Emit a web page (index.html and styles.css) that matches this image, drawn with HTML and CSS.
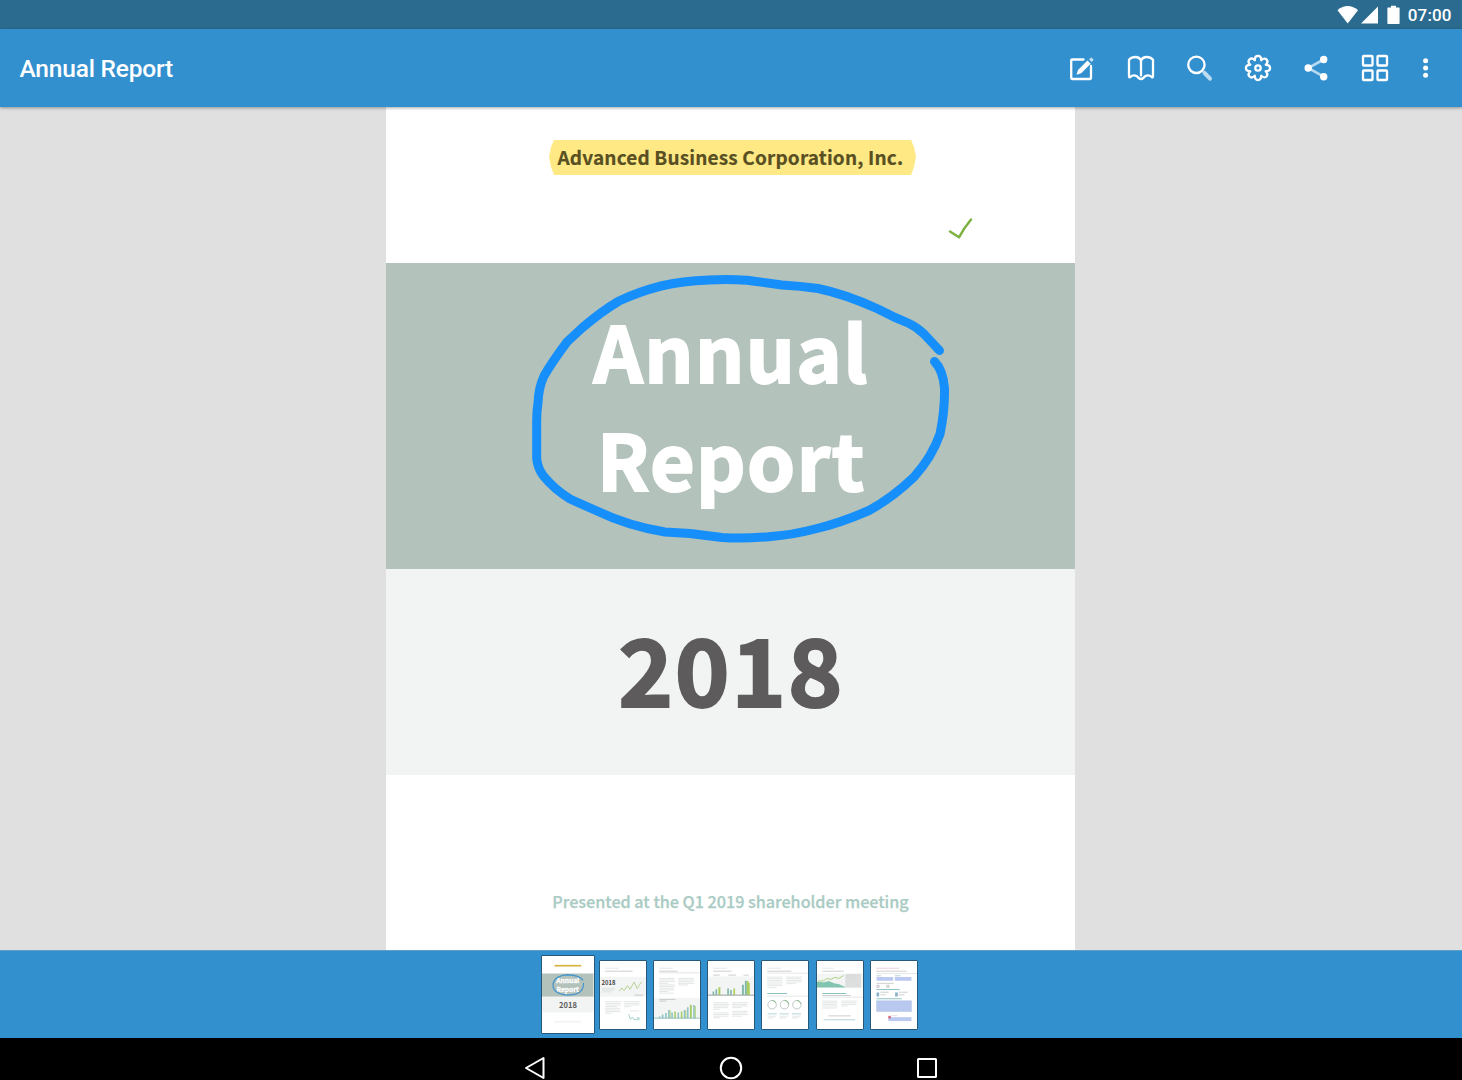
FILE: index.html
```html
<!DOCTYPE html>
<html lang="en">
<head>
<meta charset="utf-8">
<title>Annual Report</title>
<link rel="stylesheet" href="styles.css">
</head>
<body>
<div class="status">
  <svg class="status-icons" viewBox="0 0 64 20" width="64" height="20">
    <path d="M0.5 5.2Q10.500-3 21 5.200L10.700 18.500Z"/>
    <path d="M24 18.500L41 1.500V18.500Z"/>
    <path d="M51 2.500h3v-1.700h5v1.700h3q.6 0 .6.600v15.200q0 .7-.6.700h-11q-.6 0-.6-.7V3.100q0-.6.600-.6Z"/>
  </svg>
  <span class="clock">07:00</span>
</div>
<header class="appbar">
  <h1 class="title">Annual Report</h1>
  <div class="actions">
    <svg class="icon" viewBox="0 0 28 28"><path class="ln" d="M15.500 5.500H4.200q-1 0-1 1V24q0 1 1 1H22q1 0 1-1V12"/><path class="fill" d="M8.500 20.800L10 16L19.500 6.500L22.700 9.700L13.200 19.200Z"/><path class="fill soft" d="M21 5.500l1.500-1.600q.7-.6 1.400 0l1.200 1.200q.6.700 0 1.400l-1.500 1.500Z"/></svg>
    <svg class="icon" viewBox="0 0 28 28"><path class="ln" d="M14 6.500Q12.300 3 8.500 3Q4.500 3 2 5.700V22.300Q2 23.900 3.300 23Q5.600 20.800 8.500 21.600Q10.500 22.200 11.500 23.800Q14 26.200 16.500 23.800Q17.500 22.200 19.500 21.600Q22.400 20.800 24.700 23Q26 23.900 26 22.300V5.700Q23.500 3 19.500 3Q15.700 3 14 6.500V21.500"/></svg>
    <svg class="icon" viewBox="0 0 28 28"><circle class="ln" cx="10.400" cy="10.800" r="8.200"/><path class="handle" d="M18.500 18.800L24 24.700"/></svg>
    <svg class="icon" viewBox="0 0 28 28"><path class="ln" d="M10.800 6.240C10.800 .5 17.200 .5 17.200 6.240C21.260 2.180 25.820 6.740 21.760 10.800C27.500 10.800 27.500 17.200 21.760 17.200C25.820 21.260 21.260 25.820 17.200 21.760C17.200 27.500 10.800 27.500 10.800 21.760C6.740 25.820 2.180 21.260 6.240 17.200C.5 17.200 .5 10.800 6.240 10.800C2.180 6.740 6.740 2.180 10.800 6.240Z"/><circle class="ln" cx="14" cy="14" r="2.700"/></svg>
    <svg class="icon" viewBox="0 0 28 28"><path class="share-line" d="M20.700 5.500L5.200 14L20.700 22.700"/><circle class="fill" cx="20.700" cy="5.500" r="3.700"/><circle class="fill" cx="5.200" cy="14" r="3.700"/><circle class="fill" cx="20.700" cy="22.700" r="3.700"/></svg>
    <svg class="icon" viewBox="0 0 28 28"><g class="ln"><rect x="2" y="2" width="9.500" height="9.500" rx=".8"/><rect x="16.500" y="2" width="9.500" height="9.500" rx=".8"/><rect x="2" y="16.500" width="9.500" height="9.500" rx=".8"/><rect x="16.500" y="16.500" width="9.500" height="9.500" rx=".8"/></g></svg>
    <svg class="icon more" viewBox="0 0 14 28"><g class="fill"><circle cx="6.600" cy="6.800" r="2.500"/><circle cx="6.600" cy="14" r="2.500"/><circle cx="6.600" cy="21.200" r="2.500"/></g></svg>
  </div>
</header>
<main class="viewer">
  <article class="page">
    <div class="company"><span class="highlight">Advanced Business Corporation, Inc.</span></div>
    <div class="banner"><div class="line-one">Annual</div><div class="line-two">Report</div></div>
    <div class="year"><span>2018</span></div>
    <footer class="presented"><span>Presented at the Q1 2019 shareholder meeting</span></footer>
    <svg class="ink" viewBox="386 107 689 843" width="689" height="843">
      <path class="check" d="M950 231.500L959 237.300Q964 228 971 219.500"/>
      <path class="circle" d="M939.500 350.500L924 334Q917 327 908 323L894 317L878 309Q845 294 818 288.500Q800 286 782 285L747 280.300Q728 279 709 280Q682 281 661 286Q638 292 619 301Q602 311 582 328L567 342Q552 362 544 376Q538.500 388 538 403Q536.500 412 536.700 424V459Q538 469 543.500 476Q554 489 570 499L597 511Q628 526 665 532L690 533.500L722 537.500Q745 539 771 536.500Q792 535 815 529Q840 523 869 510.500Q892 498 914 477Q932 457 940 434Q945 410 944.500 388Q943 370 934.500 361.500"/>
    </svg>
  </article>
</main>
<nav class="strip">
  <svg class="thumb current" viewBox="0 0 156 234" preserveAspectRatio="none">
    <path fill="#d3b43a" d="M38 27h81v5H38z"/><path fill="#b3c2ba" d="M0 53h156v71H0z"/><path fill="#f2f4f4" d="M0 124h156v48H0z"/>
    <text class="mini-title" x="78" y="82">Annual</text><text class="mini-title" x="78" y="109">Report</text>
    <path fill="none" stroke="#4896cc" stroke-width="4" d="M124 74Q115 58 76 57Q40 60 34 82Q28 114 76 119Q126 120 126 82"/>
    <text class="mini-year" x="79" y="158">2018</text><path stroke="#dce6e3" stroke-width="2" d="M38 200h80"/>
  </svg>
  <svg class="thumb" viewBox="0 0 141 207" preserveAspectRatio="none">
    <path class="rule" d="M16 22h42"/><path class="dark" d="M16 31h84"/><path class="pale" d="M0 48h141v61H0z"/>
    <text class="mini-left" x="5" y="72">2018</text><path class="rule" d="M6 84h40M6 89h37M6 94h28M16 124h49M16 129h47M16 134h48M16 139h36M16 144h47M16 149h45M16 154h47M16 159h20M74 124h50M74 129h46M74 134h48M74 139h20M92 152h28"/>
    <path fill="none" stroke="#b7d091" stroke-width="3" d="M59 92l8-10 7 8 10-15 8 11 13-22 9 20 8-13 6-8"/><path fill="none" stroke="#76b9b2" stroke-width="2" d="M88 162l5 15 7-6 5 8 8-1M113 174q9-4 8 3-3 4-8 1"/><path class="dark" d="M105 104h27"/>
  </svg>
  <svg class="thumb" viewBox="0 0 141 207" preserveAspectRatio="none">
    <path class="rule" d="M16 22h42"/><path class="dark" d="M16 31h56"/><path class="rule" d="M16 36h125M16 53h46M16 58h48M16 63h47M16 68h28M16 73h48M16 78h47M16 83h45M16 88h47M16 93h28M16 98h44M74 53h49M74 58h50M74 63h47M74 68h50M74 73h30"/>
    <path class="pale" d="M0 112h141v63H0z"/><path class="dark" d="M16 117h50M16 122h22"/>
    <path fill="#93c5c6" d="M15 169h5v5h-5zM24 163h5v11h-5zM34 158h5v16h-5zM43 149h5v25h-5zM53 157h5v17h-5zM72 157h5v17h-5zM91 149h5v25h-5zM101 141h5v33h-5zM120 134h5v40h-5z"/><path fill="#a9cd6b" d="M48 151h3v23h-3zM62 154h5v20h-5zM82 154h5v20h-5zM96 150h3v24h-3zM110 133h6v41h-6zM125 137h3v37h-3z"/><path stroke="#6baaa9" stroke-width="2" d="M0 174h141"/>
  </svg>
  <svg class="thumb" viewBox="0 0 141 207" preserveAspectRatio="none">
    <path class="rule" d="M16 22h42"/><path class="dark" d="M16 31h56M16 43h20M62 43h24M109 43h16"/><path class="pale" d="M0 47h141v57H0z"/>
    <path fill="#7fb7a9" d="M14 93h5v10h-5zM23 86h5v17h-5zM59 84h5v19h-5zM68 88h5v15h-5zM104 72h6v31h-6zM113 60h6v43h-6z"/><path fill="#abcd5b" d="M32 80h6v23h-6zM78 84h5v19h-5zM119 61h5v42h-5zM123 66h5v37h-5z"/><path stroke="#65706f" stroke-width="2" d="M0 104h141"/>
    <path class="rule" d="M16 127h45M16 132h49M16 137h47M16 142h44M16 147h20M16 158h47M16 163h49M16 168h47M16 173h20M74 127h50M74 132h46M74 137h48M74 142h30M74 153h48M74 158h46M74 163h49M74 168h30"/>
  </svg>
  <svg class="thumb" viewBox="0 0 141 207" preserveAspectRatio="none">
    <path class="rule" d="M16 22h42"/><path class="dark" d="M16 31h74"/><path class="rule" d="M16 37h125M16 49h46M16 54h48M16 59h45M16 64h48M16 70h47M16 75h45M16 81h28M74 49h49M74 54h46M74 59h48M74 64h47M74 69h30M16 107h125"/><path class="teal" d="M16 99h61"/>
    <g fill="none" stroke="#a2a9aa" stroke-width="2"><circle cx="31" cy="133" r="13"/><circle cx="69" cy="133" r="13"/><circle cx="107" cy="133" r="13"/></g><path fill="none" stroke="#86b985" stroke-width="3" d="M31 120q8 0 12 8M69 120q12 0 13 12M107 120q10 1 12 10"/>
    <path class="teal thin" d="M17 161h28M54 161h28M92 161h28"/><path class="rule" d="M17 168h26M17 173h20M54 168h27M54 173h20M92 168h27M92 173h20"/>
  </svg>
  <svg class="thumb" viewBox="0 0 141 207" preserveAspectRatio="none">
    <path class="rule" d="M16 22h35"/><path class="dark" d="M16 31h66"/><path class="pale" d="M0 39h141v42H0z"/><path fill="#dddfdf" d="M87 39h48v42H87z"/>
    <path fill="#83c4b1" d="M0 63l22 2 14-4 16 7 16 3 19 8v2H0z"/><path fill="none" stroke="#acd080" stroke-width="3" d="M3 61l18-1 10-7 12 3 12-6 12 3 15-9"/><path class="rule" d="M92 44h24M92 49h27M92 54h20"/>
    <path class="teal" d="M16 99h74"/><path class="dark" d="M16 105h88"/><path class="rule" d="M16 110h125M16 122h46M16 127h48M16 132h45M16 137h47M16 143h45M74 122h49M74 127h44M74 132h48M74 137h20"/><path class="dark" d="M35 167h69"/><path class="teal thin" d="M20 179h97"/>
  </svg>
  <svg class="thumb" viewBox="0 0 141 207" preserveAspectRatio="none">
    <path stroke="#d9b9bd" stroke-width="2" d="M16 22h70"/><path class="dark" d="M16 31h93"/><path class="rule" d="M16 38h125"/><path class="teal thin" d="M17 45h14M73 45h18"/>
    <path fill="#bcc9f1" d="M17 49h51v11H17zM73 49h51v11H73z"/><path class="dark" d="M17 68h53"/><path fill="none" stroke="#aaa" stroke-width="2" d="M18 74h7v6h-7zM48 74h7v6h-7z"/><path class="teal" d="M17 87h71"/><path class="dark" d="M29 95h25M84 95h29M29 103h16M84 103h19"/>
    <path fill="#87aecb" d="M17 96h8v12h-8zM74 96h8v12h-8z"/><path class="teal" d="M17 115h77"/><path fill="#b9c8ee" stroke="#9bb0d6" stroke-width="1" d="M17 121h107v33H17z"/><path fill="#bcc9f1" d="M53 171h71v12H53z"/><path fill="#d66d82" d="M53 167h8v8h-8z"/><path class="rule" d="M63 166h18"/>
  </svg>
</nav>
<div class="navbar">
  <svg class="nav-icon" viewBox="0 0 24 24"><path d="M20.500 2V22L3 12Z"/></svg>
  <svg class="nav-icon" viewBox="0 0 24 24"><circle cx="12" cy="12" r="10.200"/></svg>
  <svg class="nav-icon" viewBox="0 0 24 24"><rect x="3" y="3" width="18" height="18" rx=".5"/></svg>
</div>
</body>
</html>
```
FILE: styles.css
```css
* { box-sizing: border-box; }
body {
  margin: 0;
  width: 1462px;
  height: 1080px;
  overflow: hidden;
  display: flex;
  flex-direction: column;
  background: #e0e0e0;
  font-family: Roboto, sans-serif;
}
svg { display: block; flex: none; }
.status {
  height: 29px;
  flex: none;
  display: flex;
  align-items: center;
  justify-content: flex-end;
  gap: 7px;
  padding: 1px 10.500px 0 0;
  background: #2b6b8f;
  color: #fff;
}
.status-icons { fill: #fff; }
.clock { font-size: 17px; font-weight: 500; line-height: 28px; letter-spacing: 0.1px; }
.appbar {
  position: relative;
  z-index: 1;
  height: 78px;
  flex: none;
  display: flex;
  align-items: center;
  justify-content: space-between;
  padding: 0 29px 0 19.500px;
  background: #3390cf;
  color: #fff;
  box-shadow: 0 1px 3px rgba(0, 0, 0, 0.35);
}
.title { margin: 0; font-size: 24.500px; font-weight: 500; line-height: 30px; letter-spacing: -0.2px; padding-top: 2px; }
.actions { display: flex; gap: 30.600px; }
.icon { width: 28px; height: 28px; }
.more { width: 14px; margin-left: -1px; }
.ln { fill: none; stroke: #fff; stroke-width: 2.300; stroke-linejoin: round; stroke-linecap: round; }
.fill { fill: #fff; }
.soft { opacity: 0.7; }
.handle { stroke: #bcdcf2; stroke-width: 4; stroke-linecap: round; }
.share-line { fill: none; stroke: #b4d8f0; stroke-width: 2.600; }
.viewer { height: 843px; flex: none; display: flex; justify-content: center; padding-right: 1px; }
.page {
  position: relative;
  width: 689px;
  display: flex;
  flex-direction: column;
  background: #fff;
  font-family: "Noto Sans CJK SC", "Noto Sans", sans-serif;
  font-weight: 700;
  white-space: nowrap;
}
.company { height: 156px; flex: none; display: flex; justify-content: center; align-items: flex-start; padding: 33px 0 0 4px; }
.highlight {
  width: 367px;
  height: 35px;
  padding-left: 8.500px;
  background: #ffe985;
  color: #584f22;
  font-size: 19px;
  letter-spacing: 0.160px;
  line-height: 34px;
  -webkit-text-stroke: 0.200px #584f22;
  clip-path: polygon(5px 0, 362px 0, 365px 7px, 367px 17px, 365px 27px, 362px 35px, 5px 35px, 2px 27px, 0 17px, 2px 7px);
}
.banner { height: 305.500px; flex: none; padding: 33px 0 0 1.400px; background: #b3c2ba; color: #fff; text-align: center; font-size: 77px; line-height: 107.600px; letter-spacing: 1.400px; -webkit-text-stroke: 2px #fff; }
.year { height: 206.500px; flex: none; display: flex; justify-content: center; background: #f2f4f4; color: #5d5b5c; font-size: 93px; line-height: 196px; letter-spacing: 1.600px; padding-left: 1.600px; -webkit-text-stroke: 2px #5d5b5c; }
.presented { display: flex; justify-content: center; padding-top: 112px; color: #a9cbc3; font-size: 16.150px; font-weight: 500; line-height: 29px; -webkit-text-stroke: 0.250px #a9cbc3; }
.ink { position: absolute; left: 0; top: 0; fill: none; stroke-linecap: round; stroke-linejoin: round; }
.check { stroke: #7db241; stroke-width: 2.500; }
.circle { stroke: #168ffb; stroke-width: 9; }
.strip {
  height: 88px;
  flex: none;
  display: flex;
  justify-content: center;
  align-items: center;
  gap: 6.200px;
  padding-right: 3px;
  background: #3390cf;
  border-top: 1px solid #5b9fca;
}
.thumb { width: 48px; height: 70px; background: #fff; border: 1px solid #285878; border-radius: 1px; }
.current { width: 53.500px; height: 79px; margin-right: -2px; }
.rule { stroke: #d5d8d8; stroke-width: 2; }
.dark { stroke: #b3b6b6; stroke-width: 2; }
.teal { stroke: #8bbfc2; stroke-width: 3; }
.thin { stroke-width: 2; }
.pale { fill: #f3f5f5; }
.mini-title, .mini-year, .mini-left { font-family: "Noto Sans CJK SC", "Noto Sans", sans-serif; font-weight: 700; }
.mini-title { font-size: 20px; fill: #fff; stroke: #fff; stroke-width: 0.8; text-anchor: middle; }
.mini-year { font-size: 23px; fill: #5d5b5c; text-anchor: middle; }
.mini-left { font-size: 18px; fill: #454748; }
.navbar { flex: 1; display: flex; justify-content: center; gap: 172px; padding: 18px 1px 0 0; background: #000; }
.nav-icon { width: 24px; height: 24px; fill: none; stroke: #fff; stroke-width: 2; stroke-linejoin: round; }
```
